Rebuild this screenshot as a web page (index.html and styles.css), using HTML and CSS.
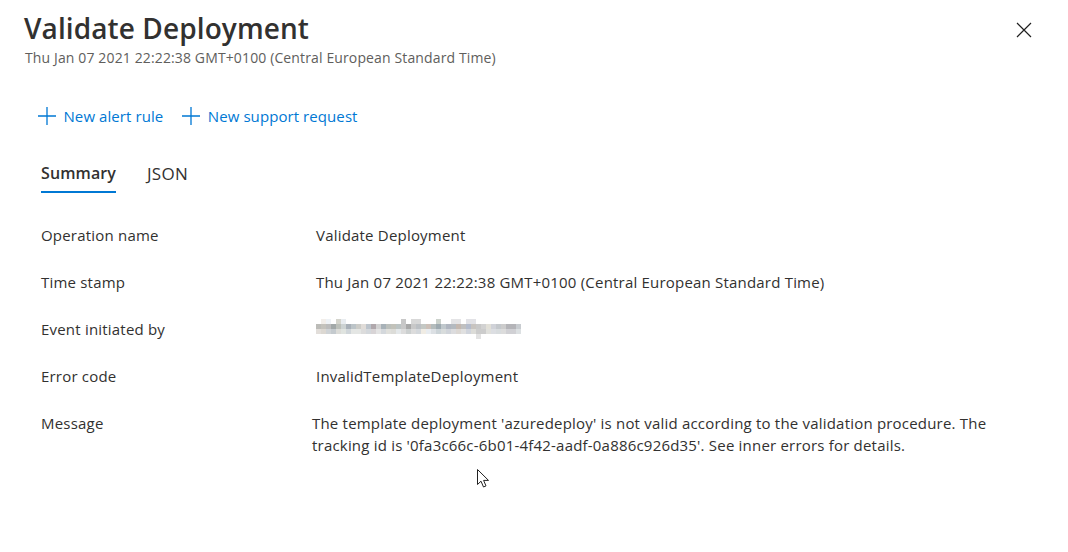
FILE: index.html
```html
<!DOCTYPE html>
<html>
<head>
  <title>Validate Deployment</title>
  <link rel="stylesheet" href="styles.css">
</head>
<body>
  <div class="panel">
    <div class="header">
      <div>
        <h1 class="title">Validate Deployment</h1>
        <div class="subtitle">Thu Jan 07 2021 22:22:38 GMT+0100 (Central European Standard Time)</div>
      </div>
      <svg class="close" width="16" height="16" viewBox="0 0 16 16"><path d="M1 1L15 15M15 1L1 15" stroke="#1f1f1f" stroke-width="1.2" fill="none"/></svg>
    </div>
    <div class="commands">
      <a class="command">
        <svg width="18" height="18" viewBox="0 0 18 18"><path d="M9 0V18M0 9H18" stroke="#0078d4" stroke-width="1.3" fill="none"/></svg>
        New alert rule
      </a>
      <a class="command">
        <svg width="18" height="18" viewBox="0 0 18 18"><path d="M9 0V18M0 9H18" stroke="#0078d4" stroke-width="1.3" fill="none"/></svg>
        New support request
      </a>
    </div>
    <div class="tabs">
      <div class="tab active">Summary</div>
      <div class="tab">JSON</div>
    </div>
    <div class="details">
      <div class="row"><div class="label">Operation name</div><div class="value">Validate Deployment</div></div>
      <div class="row"><div class="label">Time stamp</div><div class="value">Thu Jan 07 2021 22:22:38 GMT+0100 (Central European Standard Time)</div></div>
      <div class="row">
        <div class="label">Event initiated by</div>
        <div class="value">
          <!-- Pixelated e-mail address -->
          <svg class="blurred" width="210" height="20" viewBox="0 0 210 20" shape-rendering="crispEdges">
            <rect x="5" y="0" width="5" height="5" fill="#f2eeea"/><rect x="10" y="0" width="5" height="5" fill="#eef2f6"/>
            <rect x="20" y="0" width="5" height="5" fill="#d4d4cc"/><rect x="25" y="0" width="5" height="5" fill="#e8ecf0"/>
            <rect x="85" y="0" width="5" height="5" fill="#c8c8c8"/><rect x="95" y="0" width="10" height="5" fill="#d8d8d8"/>
            <rect x="120" y="0" width="5" height="5" fill="#ccd2cc"/><rect x="135" y="0" width="10" height="5" fill="#e4e4e6"/>
            <rect x="150" y="0" width="10" height="5" fill="#e2e2e6"/>
            <rect x="0" y="5" width="5" height="5" fill="#bcbcb8"/><rect x="5" y="5" width="5" height="5" fill="#c4c2bc"/>
            <rect x="10" y="5" width="5" height="5" fill="#bcbcbc"/><rect x="15" y="5" width="5" height="5" fill="#a2a8a8"/>
            <rect x="20" y="5" width="5" height="5" fill="#bcc0ba"/><rect x="25" y="5" width="5" height="5" fill="#ccd2d2"/>
            <rect x="30" y="5" width="5" height="5" fill="#a8b0b8"/><rect x="35" y="5" width="5" height="5" fill="#bcc4c8"/>
            <rect x="40" y="5" width="5" height="5" fill="#ccccc8"/><rect x="45" y="5" width="5" height="5" fill="#e0dcd8"/>
            <rect x="50" y="5" width="5" height="5" fill="#bcc4cc"/><rect x="55" y="5" width="5" height="5" fill="#b0a8ac"/>
            <rect x="60" y="5" width="5" height="5" fill="#d2d2d2"/><rect x="65" y="5" width="5" height="5" fill="#a8b2b8"/>
            <rect x="70" y="5" width="5" height="5" fill="#bcc0bc"/><rect x="75" y="5" width="5" height="5" fill="#c2c2ba"/>
            <rect x="80" y="5" width="5" height="5" fill="#bcc4c4"/><rect x="85" y="5" width="5" height="5" fill="#c8c8c8"/>
            <rect x="90" y="5" width="5" height="5" fill="#a8a8a8"/><rect x="95" y="5" width="5" height="5" fill="#c8c8c8"/>
            <rect x="100" y="5" width="5" height="5" fill="#bcc0c4"/><rect x="105" y="5" width="5" height="5" fill="#c4c8c4"/>
            <rect x="110" y="5" width="5" height="5" fill="#ccc0b8"/><rect x="115" y="5" width="5" height="5" fill="#b4bcbc"/>
            <rect x="120" y="5" width="5" height="5" fill="#9eaab0"/><rect x="125" y="5" width="5" height="5" fill="#c0c8cc"/>
            <rect x="130" y="5" width="5" height="5" fill="#b0b6c0"/><rect x="135" y="5" width="5" height="5" fill="#b4bac0"/>
            <rect x="140" y="5" width="5" height="5" fill="#c4b8b0"/><rect x="145" y="5" width="5" height="5" fill="#c0c0c0"/>
            <rect x="150" y="5" width="5" height="5" fill="#b4bccc"/><rect x="155" y="5" width="5" height="5" fill="#c8c4c0"/>
            <rect x="160" y="5" width="5" height="5" fill="#c8c8c8"/><rect x="165" y="5" width="5" height="5" fill="#d2d2d2"/>
            <rect x="170" y="5" width="5" height="5" fill="#e2e0d8"/><rect x="175" y="5" width="5" height="5" fill="#d0d2d8"/>
            <rect x="180" y="5" width="5" height="5" fill="#c4c8cc"/><rect x="185" y="5" width="5" height="5" fill="#cccccc"/>
            <rect x="190" y="5" width="10" height="5" fill="#b4b4b8"/><rect x="200" y="5" width="5" height="5" fill="#c8ccd0"/>
            <rect x="0" y="10" width="5" height="5" fill="#e2deda"/><rect x="5" y="10" width="5" height="5" fill="#dcd8d2"/>
            <rect x="10" y="10" width="5" height="5" fill="#cfd3d6"/><rect x="15" y="10" width="5" height="5" fill="#c4cace"/>
            <rect x="20" y="10" width="5" height="5" fill="#dcdcd8"/><rect x="25" y="10" width="5" height="5" fill="#e0e4e0"/>
            <rect x="30" y="10" width="5" height="5" fill="#d0d6da"/><rect x="35" y="10" width="10" height="5" fill="#e4e6e4"/>
            <rect x="45" y="10" width="5" height="5" fill="#dcdcdc"/><rect x="50" y="10" width="5" height="5" fill="#d4d8dc"/>
            <rect x="55" y="10" width="5" height="5" fill="#d8d4d6"/><rect x="60" y="10" width="5" height="5" fill="#e4e4e4"/>
            <rect x="65" y="10" width="5" height="5" fill="#d4d8dc"/><rect x="70" y="10" width="5" height="5" fill="#e0e0dc"/>
            <rect x="75" y="10" width="5" height="5" fill="#dcdcd8"/><rect x="80" y="10" width="5" height="5" fill="#e4e8ea"/>
            <rect x="85" y="10" width="5" height="5" fill="#dcdcdc"/><rect x="90" y="10" width="5" height="5" fill="#ccd0d0"/>
            <rect x="95" y="10" width="5" height="5" fill="#dcdcdc"/><rect x="100" y="10" width="5" height="5" fill="#d4d8dc"/>
            <rect x="105" y="10" width="5" height="5" fill="#f0ece4"/><rect x="110" y="10" width="5" height="5" fill="#e8ecf0"/>
            <rect x="115" y="10" width="5" height="5" fill="#dce0e4"/><rect x="120" y="10" width="5" height="5" fill="#ccd4d8"/>
            <rect x="125" y="10" width="5" height="5" fill="#d8dcdc"/><rect x="130" y="10" width="5" height="5" fill="#d0d4da"/>
            <rect x="135" y="10" width="5" height="5" fill="#dcdcde"/><rect x="140" y="10" width="5" height="5" fill="#dcd8d4"/>
            <rect x="145" y="10" width="5" height="5" fill="#e0e0e0"/><rect x="150" y="10" width="5" height="5" fill="#d0d4dc"/>
            <rect x="155" y="10" width="5" height="5" fill="#dcdcd8"/><rect x="160" y="10" width="10" height="5" fill="#cccccc"/>
            <rect x="170" y="10" width="5" height="5" fill="#e0e0dc"/><rect x="175" y="10" width="5" height="5" fill="#dcdee2"/>
            <rect x="180" y="10" width="5" height="5" fill="#d8dcde"/><rect x="185" y="10" width="5" height="5" fill="#dcdcdc"/>
            <rect x="190" y="10" width="10" height="5" fill="#d0d0d4"/><rect x="200" y="10" width="5" height="5" fill="#dce0e2"/>
            <rect x="160" y="15" width="5" height="5" fill="#e2e2e2"/>
          </svg>
        </div>
      </div>
      <div class="row"><div class="label">Error code</div><div class="value">InvalidTemplateDeployment</div></div>
      <div class="row"><div class="label">Message</div><div class="value message">The template deployment 'azuredeploy' is not valid according to the validation procedure. The tracking id is '0fa3c66c-6b01-4f42-aadf-0a886c926d35'. See inner errors for details.</div></div>
    </div>
  </div>
  <!-- Mouse pointer -->
  <svg class="pointer" width="14" height="20" viewBox="0 0 14 20"><path d="M1.5 1.5V16.5L5 13.2L7.5 19L10 17.9L7.6 12.4H12.5Z" fill="#fff" stroke="#222" stroke-width="1"/></svg>
</body>
</html>
```

FILE: styles.css
```css
body {
  margin: 0;
  background-color: white;
  color: #323130;
  font-family: "Open Sans", sans-serif;
  font-size: 15px;
}
.panel {
  padding: 11px 36px 0 24px;
}
.header {
  display: flex;
  justify-content: space-between;
  align-items: flex-start;
}
.title {
  margin: 0;
  font-size: 28px;
  font-weight: 600;
  line-height: 34px;
  letter-spacing: 0.1px;
}
.subtitle {
  margin: 3px 0 0 1px;
  font-size: 14px;
  line-height: 19px;
  letter-spacing: 0.13px;
  color: #605e5c;
}
.close {
  margin-top: 11px;
}
/*Command bar*/
.commands {
  display: flex;
  gap: 19px;
  margin: 37px 0 0 14px;
}
.command {
  display: flex;
  align-items: center;
  gap: 7.5px;
  height: 24px;
  color: #0078d4;
  font-size: 15px;
  letter-spacing: 0.08px;
}
/*Tabs*/
.tabs {
  display: flex;
  gap: 31px;
  margin: 29px 0 0 17px;
}
.tab {
  height: 34px;
  font-size: 16px;
  line-height: 33px;
  letter-spacing: 0.1px;
}
.tab:not(.active) {
  font-size: 17px;
  letter-spacing: 0.3px;
}
.tab.active {
  font-weight: 600;
  border-bottom: 2px solid #0078d4;
}
/*Details*/
.details {
  margin: 31px 0 0 17px;
}
.row {
  display: flex;
  min-height: 47px;
  line-height: 23px;
  letter-spacing: 0.2px;
}
.label {
  width: 275px;
  flex-shrink: 0;
}
.value.message {
  width: 690px;
  margin-left: -4px;
  line-height: 22px;
}
.blurred {
  display: block;
  margin-top: 1px;
}
.pointer {
  position: absolute;
  left: 476px;
  top: 468px;
}
```
